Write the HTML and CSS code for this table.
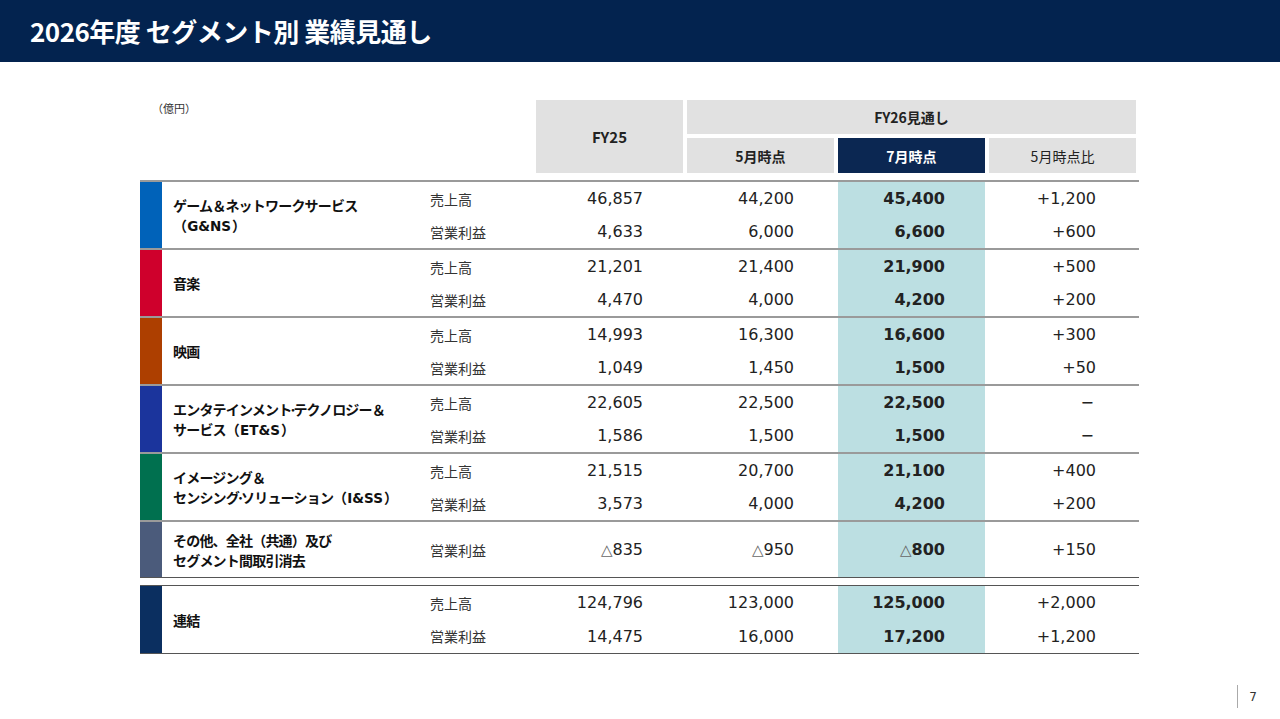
FILE: index.html
```html
<!DOCTYPE html>
<html lang="ja">
<head>
<meta charset="utf-8">
<title>2026年度 セグメント別 業績見通し</title>
<link rel="stylesheet" href="styles.css">
</head>
<body>
<header class="topbar"><h1>2026年度 セグメント別 業績見通し</h1></header>
<main class="content">
  <div class="thead">
    <div class="unit">（億円）</div>
    <div class="hc fy25">FY25</div>
    <div class="hc fy26">FY26見通し</div>
    <div class="hc sub s1">5月時点</div>
    <div class="hc sub s2 cur">7月時点</div>
    <div class="hc sub s3 normal">5月時点比</div>
  </div>
  <div class="tbody">
    <section class="seg">
      <div class="bar c-gns"></div>
      <div class="name">ゲーム＆ネットワークサービス<br>（<span class="lat">G&amp;NS</span>）</div>
      <div class="lbl">売上高</div><div class="v">46,857</div><div class="v">44,200</div><div class="v hl">45,400</div><div class="v">+1,200</div>
      <div class="lbl">営業利益</div><div class="v">4,633</div><div class="v">6,000</div><div class="v hl">6,600</div><div class="v">+600</div>
    </section>
    <section class="seg">
      <div class="bar c-music"></div>
      <div class="name">音楽</div>
      <div class="lbl">売上高</div><div class="v">21,201</div><div class="v">21,400</div><div class="v hl">21,900</div><div class="v">+500</div>
      <div class="lbl">営業利益</div><div class="v">4,470</div><div class="v">4,000</div><div class="v hl">4,200</div><div class="v">+200</div>
    </section>
    <section class="seg">
      <div class="bar c-movie"></div>
      <div class="name">映画</div>
      <div class="lbl">売上高</div><div class="v">14,993</div><div class="v">16,300</div><div class="v hl">16,600</div><div class="v">+300</div>
      <div class="lbl">営業利益</div><div class="v">1,049</div><div class="v">1,450</div><div class="v hl">1,500</div><div class="v">+50</div>
    </section>
    <section class="seg">
      <div class="bar c-ets"></div>
      <div class="name">エンタテインメント<span class="dot">･</span>テクノロジー＆<br>サービス（<span class="lat">ET&amp;S</span>）</div>
      <div class="lbl">売上高</div><div class="v">22,605</div><div class="v">22,500</div><div class="v hl">22,500</div><div class="v dash">−</div>
      <div class="lbl">営業利益</div><div class="v">1,586</div><div class="v">1,500</div><div class="v hl">1,500</div><div class="v dash">−</div>
    </section>
    <section class="seg">
      <div class="bar c-iss"></div>
      <div class="name">イメージング＆<br>センシング<span class="dot">･</span>ソリューション（<span class="lat">I&amp;SS</span>）</div>
      <div class="lbl">売上高</div><div class="v">21,515</div><div class="v">20,700</div><div class="v hl">21,100</div><div class="v">+400</div>
      <div class="lbl">営業利益</div><div class="v">3,573</div><div class="v">4,000</div><div class="v hl">4,200</div><div class="v">+200</div>
    </section>
    <section class="seg single">
      <div class="bar c-other"></div>
      <div class="name">その他、全社（共通）及び<br>セグメント間取引消去</div>
      <div class="lbl">営業利益</div><div class="v"><span class="tri">△</span>835</div><div class="v"><span class="tri">△</span>950</div><div class="v hl"><span class="tri">△</span>800</div><div class="v">+150</div>
    </section>
    <section class="seg total">
      <div class="bar c-total"></div>
      <div class="name">連結</div>
      <div class="lbl">売上高</div><div class="v">124,796</div><div class="v">123,000</div><div class="v hl">125,000</div><div class="v">+2,000</div>
      <div class="lbl">営業利益</div><div class="v">14,475</div><div class="v">16,000</div><div class="v hl">17,200</div><div class="v">+1,200</div>
    </section>
  </div>
</main>
<footer class="footer"><span class="pline"></span><span class="pno">7</span></footer>
</body>
</html>
```
FILE: styles.css
```css
* { box-sizing: border-box; }
html, body { margin: 0; padding: 0; }
body {
  width: 1280px;
  height: 719px;
  overflow: hidden;
  background: #fff;
  font-family: "Noto Sans CJK JP", "Noto Sans", sans-serif;
  color: #222;
  display: flex;
  flex-direction: column;
}
.topbar {
  height: 62px;
  background: #03234f;
  padding-left: 30px;
  display: flex;
  align-items: center;
}
.topbar h1 {
  margin: 0;
  color: #fff;
  font-size: 26px;
  font-weight: 700;
  letter-spacing: -0.5px;
  line-height: 1;
}
.content {
  padding-left: 140px;
  padding-top: 38px;
}
.thead {
  display: grid;
  grid-template-columns: 22px 250px 112px repeat(4, 147px);
  grid-template-rows: 34px 35px;
  column-gap: 4px;
  row-gap: 4px;
}
.unit {
  grid-column: 1 / 4;
  grid-row: 1;
  padding-left: 12px;
  font-size: 11px;
  line-height: 16px;
  color: #333;
}
.hc {
  background: #e1e1e1;
  display: flex;
  align-items: center;
  justify-content: center;
  font-size: 14px;
  font-weight: 700;
  color: #222;
}
.fy25 { grid-column: 4; grid-row: 1 / 3; font-size: 15px; }
.fy26 { grid-column: 5 / 8; grid-row: 1; }
.sub { grid-row: 2; }
.s1 { grid-column: 5; }
.s2 { grid-column: 6; }
.s3 { grid-column: 7; }
.cur { background: #0b2752; color: #fff; }
.normal { font-weight: 400; }
.tbody {
  margin-top: 7px;
  width: 999px;
}
.seg {
  display: grid;
  grid-template-columns: 22px 250px 112px repeat(4, 147px);
  grid-template-rows: 33px 33px;
  column-gap: 4px;
  border-top: 2px solid #9a9a9a;
}
.seg.single {
  grid-template-rows: 55px;
  border-bottom: 1px solid #555;
}
.seg.total {
  margin-top: 7px;
  border-top: 1px solid #555;
  border-bottom: 1px solid #555;
  grid-template-rows: 33px 34px;
}
.bar { grid-column: 1; grid-row: 1 / -1; }
.c-gns { background: #0062b9; }
.c-music { background: #cf002c; }
.c-movie { background: #ad3f00; }
.c-ets { background: #1b349c; }
.c-iss { background: #00704f; }
.c-other { background: #4b5b7b; }
.c-total { background: #0b2f60; }
.name {
  grid-column: 2;
  grid-row: 1 / -1;
  align-self: center;
  padding-left: 7px;
  font-size: 14px;
  letter-spacing: -0.8px;
  font-weight: 700;
  line-height: 20px;
  color: #111;
  white-space: nowrap;
}
.lat {
  font-family: "DejaVu Sans", sans-serif;
  font-size: 13.5px;
  letter-spacing: 0;
  padding: 0 1px;
}
.dot { letter-spacing: -3px; margin-left: -2px; }
.lbl {
  grid-column: 3;
  padding-left: 10px;
  display: flex;
  align-items: center;
  font-size: 14px;
  color: #333;
}
.v {
  display: flex;
  align-items: center;
  justify-content: flex-end;
  padding-right: 40px;
  font-family: "DejaVu Sans", "Noto Sans CJK JP", sans-serif;
  font-size: 16px;
  color: #222;
}
.v.hl {
  background: #bcdfe2;
  font-weight: 700;
}
.dash { padding-right: 42px; }
.tri {
  font-family: "DejaVu Sans", sans-serif;
  font-weight: 400;
  color: #666;
  font-size: 15px;
}
.footer {
  margin-top: auto;
  display: flex;
  justify-content: flex-end;
  align-items: center;
  padding-right: 23px;
  padding-bottom: 11px;
}
.pline {
  display: block;
  width: 1px;
  height: 23px;
  background: #aaa;
}
.pno {
  margin-left: 11px;
  font-size: 12px;
  font-family: "DejaVu Sans", sans-serif;
  color: #333;
}
```
